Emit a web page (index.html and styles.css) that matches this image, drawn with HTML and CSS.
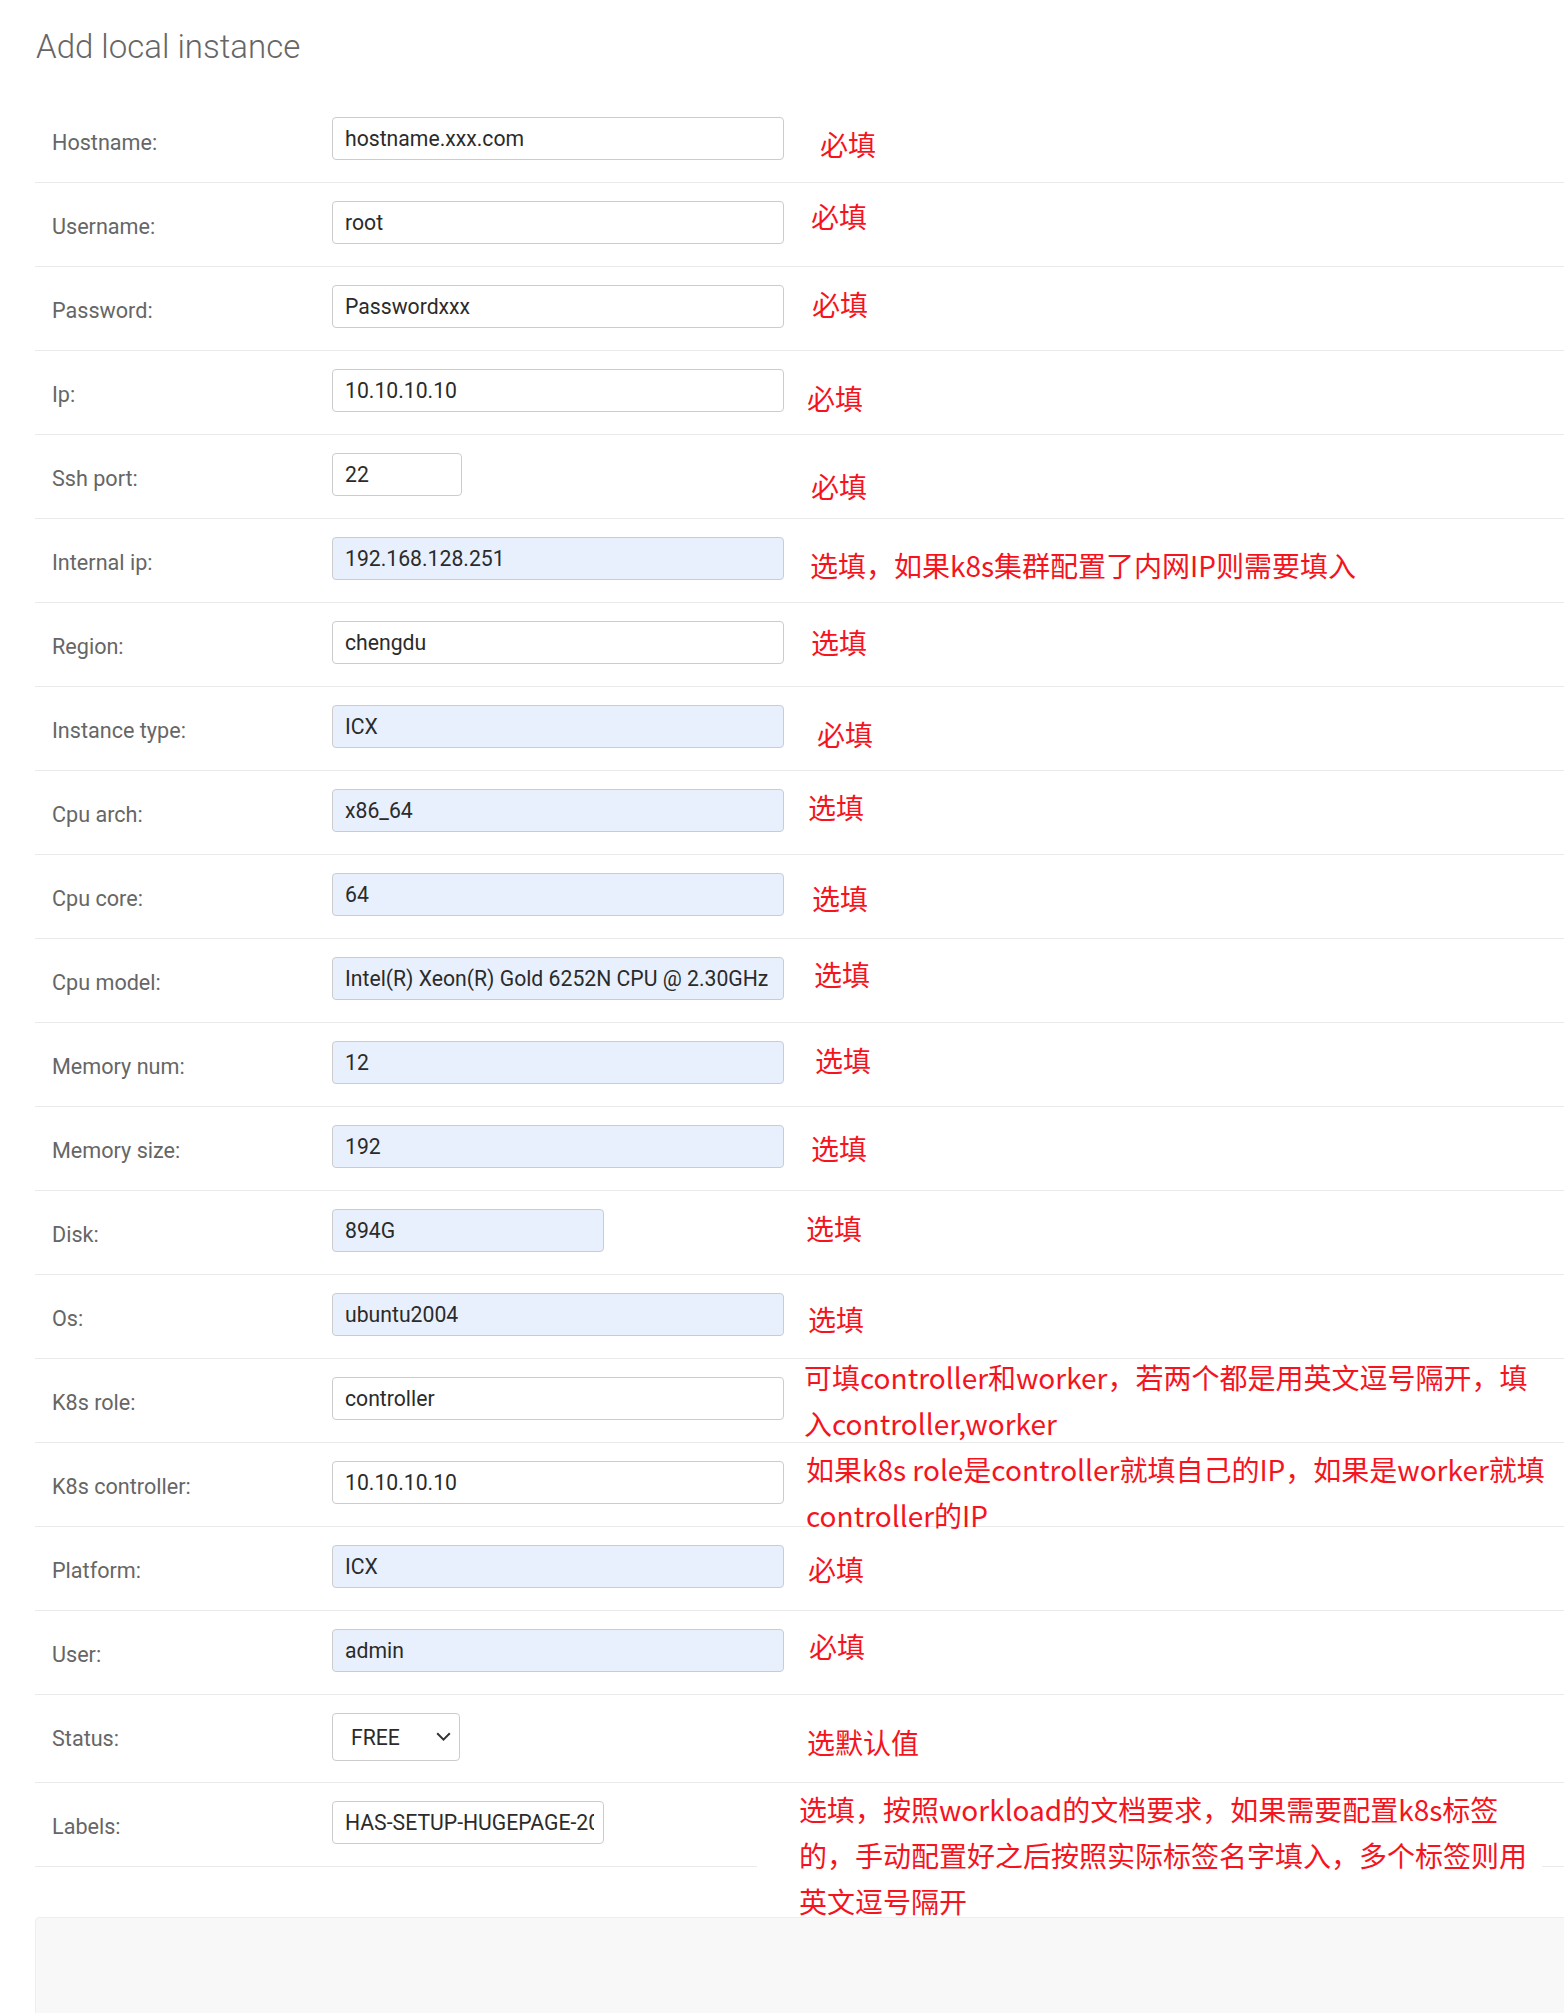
FILE: index.html
```html
<!DOCTYPE html>
<html lang="zh-CN">
<head>
<meta charset="utf-8">
<title>Add local instance</title>
<link rel="stylesheet" href="styles.css">
</head>
<body>
<div class="content">
  <h1 class="page-title">Add local instance</h1>
  <form class="instance-form">
    <div class="fieldset">
      <div class="form-row">
        <label class="field-label">Hostname:</label>
        <input class="text-input" type="text" value="hostname.xxx.com">
        <span class="note n1">必填</span>
      </div>
      <div class="form-row">
        <label class="field-label">Username:</label>
        <input class="text-input" type="text" value="root">
        <span class="note n2">必填</span>
      </div>
      <div class="form-row">
        <label class="field-label">Password:</label>
        <input class="text-input" type="text" value="Passwordxxx">
        <span class="note n3">必填</span>
      </div>
      <div class="form-row">
        <label class="field-label">Ip:</label>
        <input class="text-input" type="text" value="10.10.10.10">
        <span class="note n4">必填</span>
      </div>
      <div class="form-row">
        <label class="field-label">Ssh port:</label>
        <input class="text-input small" type="text" value="22">
        <span class="note n5">必填</span>
      </div>
      <div class="form-row">
        <label class="field-label">Internal ip:</label>
        <input class="text-input filled" type="text" value="192.168.128.251">
        <span class="note n6">选填，如果k8s集群配置了内网IP则需要填入</span>
      </div>
      <div class="form-row">
        <label class="field-label">Region:</label>
        <input class="text-input" type="text" value="chengdu">
        <span class="note n7">选填</span>
      </div>
      <div class="form-row">
        <label class="field-label">Instance type:</label>
        <input class="text-input filled" type="text" value="ICX">
        <span class="note n8">必填</span>
      </div>
      <div class="form-row">
        <label class="field-label">Cpu arch:</label>
        <input class="text-input filled" type="text" value="x86_64">
        <span class="note n9">选填</span>
      </div>
      <div class="form-row">
        <label class="field-label">Cpu core:</label>
        <input class="text-input filled" type="text" value="64">
        <span class="note n10">选填</span>
      </div>
      <div class="form-row">
        <label class="field-label">Cpu model:</label>
        <input class="text-input filled" type="text" value="Intel(R) Xeon(R) Gold 6252N CPU @ 2.30GHz">
        <span class="note n11">选填</span>
      </div>
      <div class="form-row">
        <label class="field-label">Memory num:</label>
        <input class="text-input filled" type="text" value="12">
        <span class="note n12">选填</span>
      </div>
      <div class="form-row">
        <label class="field-label">Memory size:</label>
        <input class="text-input filled" type="text" value="192">
        <span class="note n13">选填</span>
      </div>
      <div class="form-row">
        <label class="field-label">Disk:</label>
        <input class="text-input filled medium" type="text" value="894G">
        <span class="note n14">选填</span>
      </div>
      <div class="form-row">
        <label class="field-label">Os:</label>
        <input class="text-input filled" type="text" value="ubuntu2004">
        <span class="note n15">选填</span>
      </div>
      <div class="form-row">
        <label class="field-label">K8s role:</label>
        <input class="text-input" type="text" value="controller">
        <span class="note n16">可填controller和worker，若两个都是用英文逗号隔开，填<br>入controller,worker</span>
      </div>
      <div class="form-row">
        <label class="field-label">K8s controller:</label>
        <input class="text-input" type="text" value="10.10.10.10">
        <span class="note n17">如果k8s role是controller就填自己的IP，如果是worker就填<br>controller的IP</span>
      </div>
      <div class="form-row">
        <label class="field-label">Platform:</label>
        <input class="text-input filled" type="text" value="ICX">
        <span class="note n18">必填</span>
      </div>
      <div class="form-row">
        <label class="field-label">User:</label>
        <input class="text-input filled" type="text" value="admin">
        <span class="note n19">必填</span>
      </div>
      <div class="form-row status-row">
        <label class="field-label">Status:</label>
        <span class="select-wrap">
          <select class="select-input">
            <option>FREE</option>
          </select>
          <svg class="chevron" width="15" height="10" viewBox="0 0 15 10" aria-hidden="true"><path d="M1.2 1.3 L7.5 7.6 L13.8 1.3" fill="none" stroke="#333" stroke-width="2"/></svg>
        </span>
        <span class="note n20">选默认值</span>
      </div>
      <div class="form-row">
        <label class="field-label">Labels:</label>
        <input class="text-input medium" type="text" value="HAS-SETUP-HUGEPAGE-2048">
        <span class="note n21">选填，按照workload的文档要求，如果需要配置k8s标签<br>的，手动配置好之后按照实际标签名字填入，多个标签则用<br>英文逗号隔开</span>
      </div>
    </div>
    <div class="submit-row"></div>
  </form>
</div>
</body>
</html>
```

FILE: styles.css
```css
html, body {
  margin: 0;
  padding: 0;
  background: #fff;
  overflow-x: hidden;
}

body {
  font-family: Roboto, "Liberation Sans", Arial, sans-serif;
  color: #333;
}

.content {
  padding-left: 35px;
  margin-right: -60px;
}

.page-title {
  margin: 27px 0 32px 1px;
  font-family: Roboto, "Liberation Sans", sans-serif;
  font-weight: 300;
  font-size: 33px;
  line-height: 40px;
  color: #666;
}

.instance-form {
  margin: 0;
}

.fieldset {
  display: flex;
  flex-direction: column;
}

.form-row {
  position: relative;
  display: flex;
  align-items: flex-start;
  padding: 18px 0 22px 17px;
  border-bottom: 1px solid #eaeaea;
}

.status-row {
  padding-bottom: 21px;
}

.field-label {
  flex: 0 0 280px;
  padding-top: 13px;
  font-size: 21.6px;
  line-height: 25px;
  color: #666;
}

.text-input {
  box-sizing: border-box;
  width: 452px;
  height: 43px;
  margin: 0;
  padding: 0 9px 0 12px;
  border: 1px solid #ccc;
  border-radius: 4px;
  background: #fff;
  font-family: Roboto, "Liberation Sans", sans-serif;
  font-size: 21.2px;
  color: #2b2b2b;
  outline: none;
}

.text-input.filled {
  background: #e8f0fe;
}

.text-input.small {
  width: 130px;
}

.text-input.medium {
  width: 272px;
}

.select-wrap {
  position: relative;
  display: inline-block;
}

.select-input {
  box-sizing: border-box;
  width: 128px;
  height: 48px;
  margin: 0;
  padding: 0 30px 0 18px;
  border: 1px solid #ccc;
  border-radius: 4px;
  background: #fff;
  font-family: Roboto, "Liberation Sans", sans-serif;
  font-size: 21.2px;
  color: #2b2b2b;
  -webkit-appearance: none;
  appearance: none;
  outline: none;
}

.chevron {
  position: absolute;
  left: 104px;
  top: 19px;
  pointer-events: none;
}

.note {
  position: absolute;
  font-family: "Noto Sans CJK SC", "Liberation Sans", sans-serif;
  font-size: 28px;
  line-height: 46px;
  color: #f5141e;
  white-space: nowrap;
}

.n1 { left: 785px; top: 22px; }
.n2 { left: 776px; top: 10px; }
.n3 { left: 777px; top: 14px; }
.n4 { left: 772px; top: 24px; }
.n5 { left: 776px; top: 28px; }
.n6 { left: 775px; top: 23px; }
.n7 { left: 776px; top: 16px; }
.n8 { left: 782px; top: 24px; }
.n9 { left: 773px; top: 13px; }
.n10 { left: 777px; top: 20px; }
.n11 { left: 779px; top: 12px; }
.n12 { left: 780px; top: 14px; }
.n13 { left: 776px; top: 18px; }
.n14 { left: 771px; top: 14px; }
.n15 { left: 773px; top: 21px; }
.n16 { left: 769px; top: -5px; }
.n17 { left: 771px; top: 3px; }
.n18 { left: 773px; top: 19px; }
.n19 { left: 774px; top: 12px; }
.n20 { left: 772px; top: 24px; }

.n21 {
  left: 722px;
  top: 3px;
  width: 743px;
  height: 131px;
  padding-left: 42px;
  background: #fff;
}

.submit-row {
  margin-top: 50px;
  height: 140px;
  background: #f8f8f8;
  border: 1px solid #eee;
  border-radius: 4px;
}
```
